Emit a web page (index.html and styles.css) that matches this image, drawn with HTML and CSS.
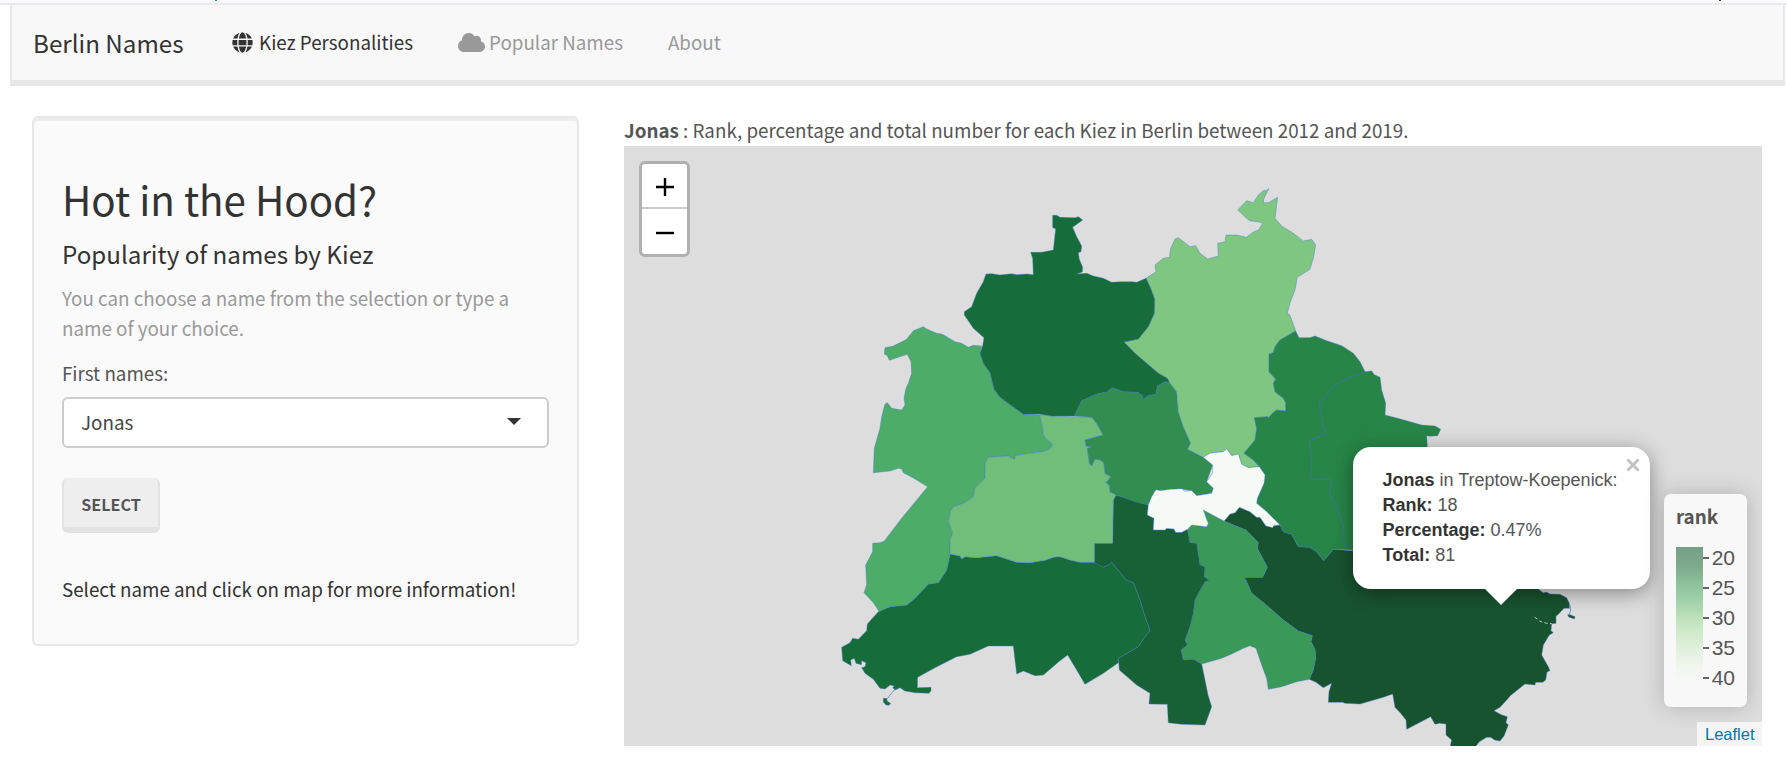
FILE: index.html
```html
<!DOCTYPE html>
<html lang="en">
<head>
<meta charset="utf-8">
<title>Berlin Names</title>
<link rel="stylesheet" href="styles.css">
</head>
<body>
<div class="topline"><i class="speck"></i><i class="speck dark"></i></div>
<nav class="navbar">
  <a class="brand">Berlin Names</a>
  <a class="nav-item active">
    <svg class="globe" viewBox="0 0 496 512"><path fill="currentColor" d="M336.500 160C322 70.700 287.800 8 248 8s-74 62.700-88.500 152h177zM152 256c0 22.200 1.200 43.500 3.300 64h185.300c2.100-20.500 3.300-41.800 3.300-64s-1.200-43.500-3.300-64H155.300c-2.100 20.500-3.300 41.800-3.300 64zm324.700-96c-28.600-67.900-86.500-120.400-158-141.600 24.400 33.800 41.200 84.700 50 141.600h108zM177.200 18.400C105.800 39.600 47.800 92.100 19.300 160h108c8.700-56.900 25.500-107.800 49.900-141.600zM487.400 192H372.700c2.100 21 3.300 42.500 3.300 64s-1.200 43-3.300 64h114.600c5.500-20.500 8.600-41.800 8.600-64s-3.100-43.500-8.500-64zM120 256c0-21.500 1.200-43 3.300-64H8.600C3.200 212.500 0 233.800 0 256s3.200 43.500 8.600 64h114.600c-2-21-3.200-42.500-3.200-64zm39.500 96c14.500 89.300 48.700 152 88.500 152s74-62.700 88.500-152h-177zm159.300 141.600c71.400-21.200 129.400-73.700 158-141.600h-108c-8.800 56.900-25.600 107.800-50 141.600zM19.300 352c28.600 67.900 86.500 120.400 158 141.600-24.400-33.800-41.200-84.700-50-141.600h-108z"/></svg>
    <span>Kiez Personalities</span>
  </a>
  <a class="nav-item">
    <svg class="cloud" viewBox="0 0 640 448"><path fill="currentColor" d="M537.600 194.600c4-10.700 6.400-22.400 6.400-34.600 0-53-43-96-96-96-19.700 0-38.100 6-53.300 16.200C367 32.200 315.300 0 256 0 167.600 0 96 71.600 96 160c0 2.700.1 5.400.2 8.100C40.200 187.800 0 241.200 0 304c0 79.500 64.500 144 144 144h368c70.700 0 128-57.300 128-128 0-61.900-44-113.600-102.400-125.400z"/></svg>
    <span>Popular Names</span>
  </a>
  <a class="nav-item about"><span>About</span></a>
</nav>

<main class="content">
  <aside class="panel">
    <h2 class="heading">Hot in the Hood?</h2>
    <h4 class="subheading">Popularity of names by Kiez</h4>
    <p class="help">You can choose a name from the selection or type a name of your choice.</p>
    <div class="label">First names:</div>
    <div class="select"><span>Jonas</span><i class="caret"></i></div>
    <button class="button">Select</button>
    <p class="note">Select name and click on map for more information!</p>
  </aside>

  <section class="main">
    <div class="map-title"><b>Jonas</b> : Rank, percentage and total number for each Kiez in Berlin between 2012 and 2019.</div>
    <div class="map">
      <svg class="districts" viewBox="-618 -132 3414 1800">
        <!-- Treptow-Koepenick -->
        <path fill="#18532f" d="M1182,993 1200,972 1215,968 1228,952 1260,965 1280,982 1290,982 1308,1008 1332,1008 1350,1005 1360,1025 1385,1033 1405,1070 1440,1072 1460,1085 1481,1112 1510,1078 1566,1082 2000,1082 2125,1198 2140,1208 2150,1206 2160,1212 2190,1213 2210,1223 2218,1240 2218,1255 2202,1255 2185,1273 2178,1279 2178,1300 2160,1302 2165,1303 2163,1322 2170,1328 2158,1335 2140,1365 2135,1395 2155,1430 2160,1442 2151,1446 2147,1470 2138,1477 2117,1477 2115,1485 2085,1482 2065,1498 2041,1517 2035,1525 2010,1552 1992,1562 2014,1574 2032,1580 2028,1598 2035,1605 2022,1638 2010,1653 1994,1650 1982,1642 1970,1642 1948,1655 1935,1672 1860,1672 1865,1650 1848,1635 1848,1602 1828,1600 1815,1603 1802,1580 1730,1618 1728,1590 1712,1570 1695,1552 1688,1512 1660,1522 1632,1530 1590,1542 1545,1540 1538,1537 1495,1537 1497,1505 1505,1480 1480,1493 1458,1477 1438,1468 1450,1440 1457,1405 1455,1378 1443,1355 1447,1337 1405,1323 1360,1290 1305,1242 1265,1210 1250,1175 1242,1162 1298,1162 1312,1132 1282,1075 1285,1058 1248,1020 1210,1005z"/>
        <path fill="#18532f" d="M2213,1274 2220,1274 2235,1280 2233,1287 2216,1281z"/>
        <path class="hairline" d="M2220,1245 2222,1262 2217,1274"/>
        <path class="inlet" d="M2114,1282 2122,1287 2130,1294 2150,1300 2165,1301"/>
        <!-- Neukoelln -->
        <path fill="#3a9957" d="M1120,960 1182,993 1210,1005 1248,1020 1285,1058 1282,1075 1312,1132 1298,1162 1242,1162 1250,1175 1265,1210 1305,1242 1360,1290 1405,1323 1447,1337 1443,1355 1455,1378 1457,1405 1450,1440 1438,1468 1400,1475 1355,1490 1315,1498 1310,1465 1297,1430 1278,1375 1260,1367 1240,1375 1205,1392 1175,1405 1115,1422 1090,1408 1060,1410 1053,1380 1072,1365 1065,1350 1080,1310 1090,1270 1095,1230 1108,1205 1125,1175 1138,1172 1123,1160 1125,1130 1110,1125 1100,1060 1080,1058 1072,1020 1085,1005 1130,1010 1135,1000z"/>
        <!-- Tempelhof-Schoeneberg -->
        <path fill="#186035" d="M858,915 955,945 952,975 972,985 970,1020 1005,1020 1010,1015 1032,1017 1037,1027 1055,1027 1072,1018 1080,1058 1100,1060 1110,1125 1125,1130 1123,1160 1138,1172 1125,1175 1108,1205 1095,1230 1090,1270 1080,1310 1065,1350 1072,1365 1053,1380 1060,1410 1090,1408 1115,1422 1125,1470 1134,1515 1145,1550 1125,1605 1055,1603 1015,1598 1012,1543 957,1542 960,1510 920,1485 868,1440 865,1405 925,1370 945,1340 960,1322 945,1280 930,1230 910,1178 888,1170 845,1117 838,1124 820,1132 793,1120 793,1060 848,1060 850,930z"/>
        <!-- Steglitz-Zehlendorf -->
        <path fill="#176d3a" d="M360,1092 390,1098 395,1107 405,1100 437,1103 470,1100 500,1097 530,1107 560,1117 600,1118 645,1111 670,1102 690,1100 720,1110 750,1117 793,1117 820,1132 838,1124 845,1117 888,1170 910,1178 930,1230 945,1280 960,1322 945,1340 925,1370 865,1405 865,1418 820,1450 765,1483 740,1440 713,1395 690,1412 640,1455 615,1457 580,1443 560,1452 550,1368 475,1368 420,1393 380,1400 315,1433 263,1462 262,1493 303,1492 303,1502 297,1510 255,1508 225,1503 210,1493 196,1500 188,1493 193,1488 180,1485 165,1497 150,1495 130,1468 105,1450 95,1433 105,1430 108,1418 95,1412 94,1424 78,1420 73,1405 62,1410 64,1427 38,1412 35,1372 60,1358 68,1345 85,1348 110,1322 112,1302 130,1282 148,1262 180,1250 230,1245 255,1225 295,1182 325,1178 350,1140z"/>
        <path fill="#176d3a" d="M160,1525 170,1525 172,1534 182,1540 177,1546 168,1545 160,1536z"/>
        <path class="hairline" d="M200,1493 184,1510 172,1526"/>
        <!-- Spandau -->
        <path fill="#4eac69" d="M280,410 290,417 320,430 335,432 345,437 375,455 395,460 415,472 430,466 455,468 450,490 460,520 480,548 492,598 510,622 580,673 628,675 637,705 640,735 650,748 668,762 660,777 640,785 600,790 555,797 555,807 545,805 535,798 500,800 475,802 465,820 465,865 435,895 430,920 405,938 370,950 362,965 355,995 368,1028 360,1050 360,1095 350,1140 325,1178 295,1182 255,1225 230,1245 180,1250 148,1265 130,1238 102,1208 110,1185 107,1125 128,1085 128,1060 150,1058 163,1053 215,985 293,890 250,864 220,848 215,837 205,835 180,843 130,848 133,775 150,715 155,680 165,642 172,638 185,655 215,660 225,645 222,625 228,595 235,580 245,550 243,515 232,493 178,511 172,497 163,492 165,473 190,468 230,448 250,422z"/>
        <!-- Charlottenburg-Wilmersdorf -->
        <path fill="#70be79" d="M628,675 665,678 785,682 800,700 820,735 765,750 768,768 785,770 772,775 778,820 785,828 795,808 812,810 822,820 825,850 843,860 828,878 838,885 840,905 858,915 850,930 848,1060 793,1060 793,1117 750,1117 720,1110 690,1100 670,1102 645,1111 600,1118 560,1117 530,1107 500,1097 470,1100 437,1103 405,1100 395,1107 390,1098 360,1092 360,1050 368,1028 355,995 362,965 370,950 405,938 430,920 435,895 465,865 465,820 475,802 500,800 535,798 545,805 555,807 555,797 600,790 640,785 660,777 668,762 650,748 640,735 637,705z"/>
        <!-- Mitte -->
        <path fill="#328e50" d="M733,678 755,632 800,612 830,606 848,593 880,605 925,607 928,614 935,613 940,628 955,617 978,612 982,588 1005,575 1018,577 1040,605 1045,665 1060,710 1082,760 1073,778 1120,802 1148,825 1130,875 1150,895 1145,910 1100,917 1085,902 1055,897 975,902 955,945 920,937 858,915 840,905 838,885 828,878 843,860 825,850 822,820 812,810 795,808 785,828 778,820 772,775 785,770 768,768 765,750 820,735 800,700 785,682z"/>
        <!-- Pankow -->
        <path fill="#7fc681" d="M948,265 978,245 975,225 1000,205 1018,202 1022,175 1035,147 1045,143 1080,170 1097,167 1110,190 1133,207 1165,198 1163,160 1185,155 1188,135 1220,135 1250,142 1268,127 1285,120 1298,100 1292,97 1258,92 1223,60 1250,32 1270,38 1285,15 1302,0 1308,3 1317,-5 1302,25 1300,38 1315,38 1343,22 1335,85 1355,108 1390,130 1420,153 1445,148 1457,165 1450,205 1440,238 1402,262 1395,300 1380,340 1372,370 1380,375 1397,423 1350,450 1335,470 1330,488 1317,492 1317,545 1337,568 1330,580 1335,605 1360,625 1367,638 1367,663 1340,660 1325,672 1315,684 1313,680 1273,683 1280,715 1275,750 1242,790 1270,810 1288,830 1255,833 1235,823 1225,792 1205,797 1190,777 1180,785 1140,790 1120,802 1073,778 1082,760 1060,710 1045,665 1040,605 1018,577 1012,565 985,550 915,490 882,456 925,447 955,410 973,370 974,328 962,295z"/>
        <!-- Reinickendorf -->
        <path fill="#176d3a" d="M668,76 680,76 690,82 735,83 745,80 758,90 728,112 740,140 755,168 753,185 745,188 748,208 758,232 757,246 740,252 770,250 790,258 820,265 845,277 870,275 905,275 920,277 948,265 962,295 974,328 973,370 955,410 925,447 882,456 915,490 985,550 1012,565 1018,577 1005,575 982,588 978,612 955,617 940,628 935,613 928,614 925,607 880,605 848,593 830,606 800,612 755,632 733,678 665,678 628,673 580,673 510,622 492,598 480,548 460,520 450,490 458,467 462,443 430,415 403,375 403,365 425,350 440,310 460,275 468,252 485,251 510,255 545,251 560,254 590,252 610,254 608,205 602,187 635,187 670,180 677,116 668,113z"/>
        <!-- Lichtenberg and Marzahn-Hellersdorf -->
        <path fill="#278547" d="M1397,423 1407,443 1440,443 1455,438 1490,452 1535,467 1570,490 1590,515 1605,545 1625,543 1633,554 1650,562 1655,600 1667,640 1665,675 1700,684 1740,695 1775,705 1815,708 1832,718 1823,737 1800,739 1790,737 1792,770 1792,1000 1650,1082 1510,1078 1481,1112 1460,1085 1440,1072 1405,1070 1385,1033 1360,1025 1350,1005 1310,965 1280,940 1282,925 1302,880 1305,855 1288,830 1270,810 1242,790 1275,750 1280,715 1273,683 1313,680 1315,684 1325,672 1340,660 1367,663 1367,638 1360,625 1335,605 1330,580 1337,568 1317,545 1317,492 1330,488 1335,470 1350,450z"/>
        <path class="hairline" d="M1605,545 1560,562 1515,585 1490,615 1467,640 1475,680 1480,710 1487,725 1470,740 1440,750 1442,790 1445,810 1442,867 1500,868 1504,880 1497,910 1520,950 1532,985 1540,1010 1538,1045 1550,1080"/>
        <!-- Friedrichshain-Kreuzberg -->
        <path fill="#f5faf5" d="M955,945 965,920 978,899 990,902 1020,898 1055,896 1065,904 1085,902 1100,917 1145,910 1150,895 1130,875 1148,850 1148,825 1120,802 1140,790 1180,785 1190,777 1205,797 1225,792 1235,823 1255,833 1288,830 1305,855 1302,880 1282,925 1280,940 1310,965 1350,1005 1332,1005 1328,1013 1308,1008 1290,982 1280,982 1260,965 1228,952 1215,968 1200,972 1182,993 1120,960 1130,990 1135,1000 1130,1010 1085,1005 1072,1018 1055,1027 1037,1027 1032,1017 1010,1015 1005,1020 970,1020 972,985 952,975z"/>
      </svg>

      <div class="zoom">
        <a><svg viewBox="0 0 18 18"><path d="M0 9H18M9 0V18"/></svg></a>
        <a><svg viewBox="0 0 18 18"><path d="M0 9H18"/></svg></a>
      </div>

      <div class="popup">
        <div class="popup-body">
          <b>Jonas</b> in Treptow-Koepenick:<br>
          <b>Rank:</b> 18<br>
          <b>Percentage:</b> 0.47%<br>
          <b>Total:</b> 81
        </div>
        <svg class="close" viewBox="0 0 14 14"><path d="M1.500 1.500 12.500 12.500M12.500 1.500 1.500 12.500"/></svg>
        <div class="tip"></div>
      </div>

      <div class="legend">
        <div class="legend-title">rank</div>
        <div class="scale">
          <div class="ramp"></div>
          <ul class="ticks"><li>20</li><li>25</li><li>30</li><li>35</li><li>40</li></ul>
        </div>
      </div>

      <div class="attribution">Leaflet</div>
    </div>
  </section>
</main>
</body>
</html>
```

FILE: styles.css
```css
* { box-sizing: border-box; }

body {
  margin: 0;
  width: 1787px;
  height: 767px;
  overflow: hidden;
  background: #fff;
  color: #555;
  font-family: "Noto Sans CJK SC", "Noto Sans", sans-serif;
  font-size: 18.8px;
  line-height: 30px;
}

h2, h4, p, ul { margin: 0; padding: 0; font-weight: 400; }

.topline {
  display: flex;
  justify-content: space-between;
  height: 5px;
  padding: 0 66px 0 215px;
  background: #fbfbfc;
  border-bottom: 2px solid #e8e8ee;
}

.speck { width: 2px; height: 1px; background: #3a7ca8; }
.speck.dark { background: #4a2060; }

.navbar {
  display: flex;
  width: 1775px;
  height: 81px;
  margin-left: 10px;
  padding-left: 21px;
  line-height: 75px;
  background: #f8f8f8;
  border: solid #e7e7e7;
  border-width: 0 2px 6px;
}

.brand {
  width: 199px;
  color: #333;
  font-size: 24.2px;
}

.nav-item {
  display: flex;
  align-items: center;
  color: #999;
}

.nav-item span { margin-top: -2px; }
.nav-item.active { width: 226px; color: #333; }
.nav-item.about { margin-left: 45px; }
.globe { width: 21px; height: 21px; margin-right: 6px; }
.cloud { width: 27px; height: 19px; margin-right: 4px; }

.content {
  display: flex;
  align-items: flex-start;
  gap: 45px;
  padding: 29px 0 0 32px;
}

.panel {
  width: 547px;
  height: 530px;
  margin-top: 1px;
  padding: 56px 28px 0;
  background: #fafafa;
  border: 2px solid #e8e8e8;
  border-radius: 6px;
  box-shadow: inset 0 3px 0 #ededed;
}

.heading { color: #333; font-size: 40.3px; line-height: 50px; }
.subheading { margin-top: 15px; color: #333; font-size: 24.2px; }
.help { margin-top: 14px; color: #999; }
.label { margin-top: 15px; }

.select {
  display: flex;
  align-items: center;
  justify-content: space-between;
  height: 51px;
  margin-top: 9px;
  padding: 0 26px 0 17px;
  background: #fff;
  border: 2px solid #ccc;
  border-radius: 6px;
  color: #444;
}

.select span { margin-top: -2px; }

.caret {
  margin-top: -3px;
  border: solid transparent;
  border-width: 7px 7.5px 0;
  border-top-color: #333;
}

.button {
  display: block;
  width: 98px;
  height: 55px;
  margin-top: 30px;
  padding: 3px 0 0;
  background: #eee;
  border: solid #e2e2e2;
  border-width: 0 2px 6px;
  border-radius: 6px;
  color: #555;
  font: 700 16.1px/46px "Noto Sans CJK SC", sans-serif;
  text-transform: uppercase;
}

.note { margin-top: 41px; color: #333; white-space: nowrap; }

.main { width: 1138px; }
.map-title { height: 31px; white-space: nowrap; }

.map {
  position: relative;
  height: 600px;
  overflow: hidden;
  background: #ddd;
  font-family: "Liberation Sans", Arial, sans-serif;
}

.districts { display: block; width: 1138px; height: 600px; }
.districts path { stroke: rgba(60, 115, 215, .38); stroke-width: 3; }
.districts .hairline { fill: none; stroke: rgba(60, 115, 190, .7); }
.districts .inlet { fill: none; stroke: #b9c8d8; stroke-width: 3; stroke-dasharray: 10 7; }

.zoom {
  position: absolute;
  left: 15px;
  top: 15px;
  border: 3px solid rgba(0, 0, 0, .2);
  border-radius: 6px;
  background: #fff;
  background-clip: padding-box;
}

.zoom a {
  display: flex;
  align-items: center;
  justify-content: center;
  width: 45px;
  height: 45px;
}

.zoom a:first-child { padding-top: 2px; border-bottom: 2px solid #ccc; }
.zoom a:last-child { padding-top: 2px; }
.zoom svg { width: 18px; height: 18px; margin-left: 1px; }
.zoom path { stroke: #000; stroke-width: 2.4; }

.popup {
  position: absolute;
  left: 728.5px;
  top: 301px;
  width: 297px;
  height: 142px;
  padding: 21px 30px;
  background: #fff;
  border-radius: 18px;
  box-shadow: 0 4px 20px rgba(0, 0, 0, .4);
  color: #555;
  font-size: 18px;
  line-height: 25px;
  white-space: nowrap;
}

.popup b { color: #333; }

.close {
  position: absolute;
  right: 10px;
  top: 11px;
  width: 14px;
  height: 14px;
  stroke: #c3c3c3;
  stroke-width: 3;
}

.tip {
  position: absolute;
  left: 132px;
  top: 142px;
  border: solid transparent;
  border-width: 16px 16.5px 0;
  border-top-color: #fff;
}

.legend {
  position: absolute;
  left: 1040px;
  top: 348px;
  width: 83px;
  height: 213px;
  padding: 8px 12px;
  background: #f8f8f8;
  border-radius: 7px;
  box-shadow: 0 0 22px rgba(0, 0, 0, .2);
  font-size: 21px;
}

.legend-title {
  height: 45px;
  font: 700 18.8px/28px "Noto Sans CJK SC", sans-serif;
}

.scale { display: flex; }

.ramp {
  width: 27px;
  height: 136px;
  background: linear-gradient(#76a087, #7dab8d 15%, #8fc39d 28%, #a1d2a9 40%, #bde1b9 52%, #cfeaca 62%, #e1f0dd 75%, #f0f6ee 88%, #f8f8f8);
}

.ticks { list-style: none; margin-top: -3.5px; }
.ticks li { display: flex; align-items: center; height: 29.9px; line-height: 30px; }
.ticks li::before { content: ""; width: 6px; height: 2px; margin-right: 3px; background: #666; }

.attribution {
  position: absolute;
  right: 0;
  bottom: 0;
  width: 65px;
  height: 24px;
  padding-left: 8px;
  background: rgba(255, 255, 255, .7);
  color: #0078a8;
  font-size: 16.5px;
  line-height: 24px;
}
```
